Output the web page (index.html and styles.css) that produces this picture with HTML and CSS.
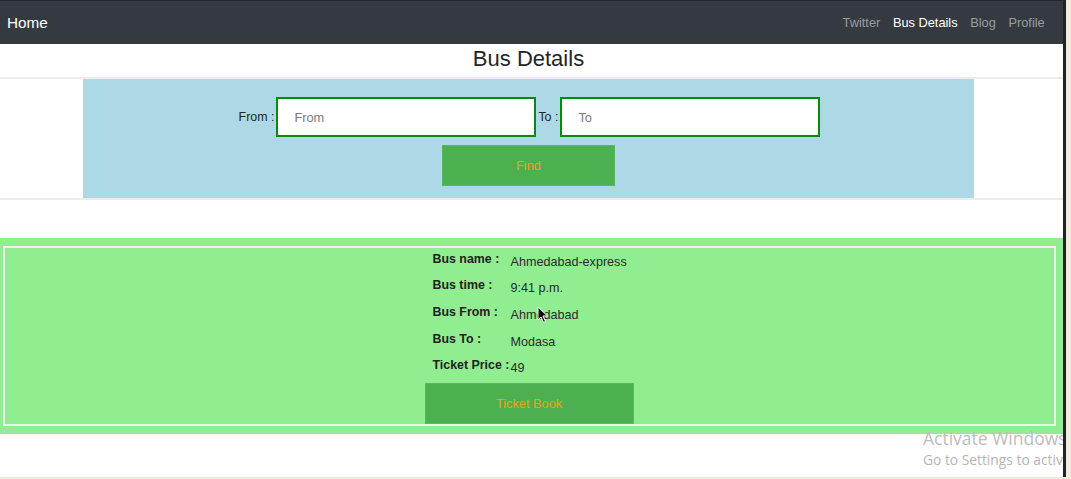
FILE: index.html
```html
<!DOCTYPE html>
<html lang="en">
<head>
<meta charset="utf-8">
<title>Bus Details</title>
<link rel="stylesheet" href="styles.css">
</head>
<body>
<div class="screen">
  <nav class="navbar">
    <a class="brand" href="#">Home</a>
    <ul class="nav-links">
      <li><a href="#">Twitter</a></li>
      <li><a class="active" href="#">Bus Details</a></li>
      <li><a href="#">Blog</a></li>
      <li><a href="#">Profile</a></li>
    </ul>
  </nav>

  <h1 class="page-title">Bus Details</h1>

  <section class="search-section">
    <form class="search-box">
      <div class="search-row">
        <label class="field-label">From :</label>
        <input class="field-input" type="text" placeholder="From">
        <label class="field-label">To :</label>
        <input class="field-input" type="text" placeholder="To">
      </div>
      <button class="btn find-btn" type="button">Find</button>
    </form>
  </section>

  <section class="results-section">
    <div class="result-card">
      <div class="details">
        <div class="details-grid">
          <span class="d-label">Bus name :</span><span class="d-value">Ahmedabad-express</span>
          <span class="d-label">Bus time :</span><span class="d-value">9:41 p.m.</span>
          <span class="d-label">Bus From :</span><span class="d-value">Ahmedabad</span>
          <span class="d-label">Bus To :</span><span class="d-value">Modasa</span>
          <span class="d-label">Ticket Price :</span><span class="d-value">49</span>
        </div>
        <button class="btn book-btn" type="button">Ticket Book</button>
      </div>
    </div>
  </section>

  <svg class="cursor" width="12" height="18" viewBox="0 0 12 18">
    <path d="M1 1 L1 14 L4 11 L6.5 16.5 L8.5 15.5 L6 10 L10.5 10 Z" fill="#111" stroke="#fff" stroke-width="1"/>
  </svg>

  <div class="watermark">
    <div class="wm-title">Activate Windows</div>
    <div class="wm-sub">Go to Settings to activate Windows.</div>
  </div>
</div>
</body>
</html>
```

FILE: styles.css
```css
* { box-sizing: border-box; }

html, body {
  margin: 0;
  padding: 0;
}

body {
  background: #f0ebdc;
  font-family: "Liberation Sans", Arial, sans-serif;
  color: #212529;
  width: 1071px;
  height: 479px;
  overflow: hidden;
}

.screen {
  position: relative;
  width: 1066px;
  height: 477px;
  background: #ffffff;
  border-right: 3px solid #1f2327;
  overflow: hidden;
}

/* Navbar */
.navbar {
  height: 44px;
  background: #343a40;
  border-top: 1px solid #23272b;
  display: flex;
  align-items: center;
  justify-content: space-between;
  padding: 0 12px 0 7px;
}

.brand {
  color: #ffffff;
  text-decoration: none;
  font-size: 15.3px;
}

.nav-links {
  list-style: none;
  margin: 0;
  padding: 0;
  display: flex;
}

.nav-links a {
  display: block;
  padding: 0 6.3px;
  color: #9a9da0;
  text-decoration: none;
  font-size: 12.8px;
}

.nav-links a.active {
  color: #ffffff;
}

/* Title */
.page-title {
  margin: 0;
  height: 33px;
  padding-right: 6px;
  text-align: center;
  font-weight: normal;
  font-size: 22px;
  line-height: 29px;
  color: #212529;
}

/* Search */
.search-section {
  border-top: 2px solid #ececec;
  border-bottom: 2px solid #ececec;
  padding-right: 6px;
}

.search-box {
  width: 891px;
  height: 119px;
  margin: 0 auto;
  background: #add8e6;
  padding-top: 18px;
  display: flex;
  flex-direction: column;
  align-items: center;
  gap: 8px;
}

.search-row {
  display: flex;
  align-items: center;
}

.field-label {
  font-size: 12.4px;
  color: #212529;
  margin: 0 2px;
}

.field-input {
  width: 260px;
  height: 40px;
  border: 2px solid #0a8a0a;
  background: #ffffff;
  padding: 0 0 0 16px;
  font-family: "Liberation Sans", Arial, sans-serif;
  font-size: 12.8px;
  color: #212529;
  outline: none;
}

.field-input::placeholder {
  color: #7a7a7a;
}

.btn {
  border: 1px solid #58b95c;
  background: #4caf50;
  color: #f0a20c;
  font-family: "Liberation Sans", Arial, sans-serif;
  font-size: 12.8px;
  cursor: pointer;
}

.find-btn {
  width: 173px;
  height: 41px;
}

/* Results */
.results-section {
  margin-top: 38px;
  background: #90ee90;
  padding: 8px 7px 8px 3px;
}

.result-card {
  border: 2px solid #eef3ee;
  display: flex;
  justify-content: center;
}

.details {
  width: 209px;
  margin-right: 1px;
  display: flex;
  flex-direction: column;
  padding-top: 1.5px;
}

.details-grid {
  display: grid;
  grid-template-columns: 78px 1fr;
  grid-auto-rows: 26.7px;
  padding-left: 8px;
}

.d-label {
  font-weight: bold;
  font-size: 12.4px;
  line-height: 15px;
  padding-top: 2px;
  white-space: nowrap;
  color: #222;
}

.d-value {
  font-size: 12.6px;
  line-height: 15px;
  padding-top: 5px;
  white-space: nowrap;
  color: #2a2a2a;
}

.book-btn {
  width: 209px;
  height: 41px;
}

/* Overlays */
.cursor {
  position: absolute;
  left: 537px;
  top: 306px;
}

.watermark {
  position: absolute;
  left: 923px;
  top: 427px;
  font-family: "Open Sans", "DejaVu Sans", sans-serif;
  white-space: nowrap;
  color: #bdbdbd;
}

.wm-title {
  font-size: 17.5px;
  line-height: 22px;
}

.wm-sub {
  font-size: 13.8px;
  line-height: 22px;
  color: #b5b5b5;
}
```
